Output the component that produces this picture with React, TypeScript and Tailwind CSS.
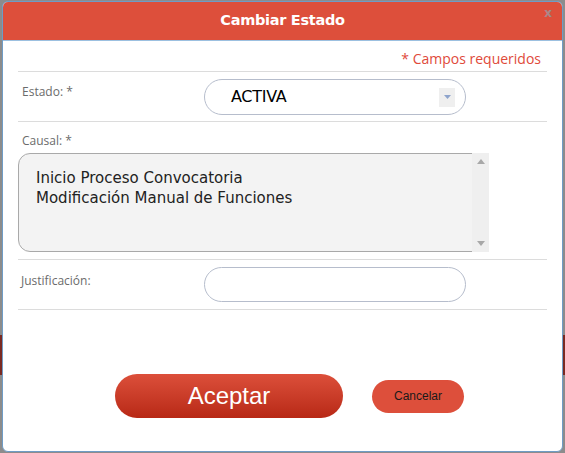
export default function App() {
  return (
    <div className="relative w-[565px] h-[453px] bg-[#8c8c8c] overflow-hidden">
      <div className="absolute left-0 top-[335px] w-[3px] h-[40px] bg-[#7a2a22]" />
      <div className="absolute right-0 top-[335px] w-[3px] h-[40px] bg-[#7a2a22]" />
      <div className="absolute left-[2px] top-[1px] w-[561px] h-[451px] rounded-[6px] border border-[#6f9cc6] bg-white overflow-hidden flex flex-col">
        <div className="h-[39px] shrink-0 bg-[#dd4f3b] border-b border-[#9cc0e0] relative flex items-center justify-center">
          <span className="text-white font-bold text-[14.5px] font-['DejaVu_Sans',sans-serif] tracking-[-0.3px]">Cambiar Estado</span>
          <span className="absolute right-[10px] top-[5px] text-[12px] font-bold text-[#a8888a] font-['DejaVu_Sans',sans-serif] leading-none">x</span>
        </div>
        <div className="px-[15px] font-['Open_Sans',sans-serif]">
          <div className="h-[30px] flex items-center justify-end pr-[6px] pt-[4px] text-[14px] text-[#e04a3a]">* Campos requeridos</div>
          <div className="border-t border-[#dcdcdc]" />
          <div className="h-[49px] flex items-start">
            <div className="w-[186px] pl-[4px] pt-[11px] text-[12px] text-[#6b6b6b]">Estado: *</div>
            <div className="mt-[7px] w-[262px] h-[36px] rounded-full border border-[#b6bdcc] flex items-center pl-[26px] pr-[10px]">
              <span className="flex-1 text-[16px] text-black font-['DejaVu_Sans',sans-serif] tracking-[-0.3px]">ACTIVA</span>
              <span className="w-[16px] h-[19px] bg-[#efefef] flex items-center justify-center">
                <svg width="7" height="4" viewBox="0 0 7 4"><path d="M0 0h7L3.5 4z" fill="#8ea4cc" /></svg>
              </span>
            </div>
          </div>
          <div className="border-t border-[#dcdcdc]" />
          <div className="pl-[4px] pt-[10px] h-[31px] text-[12px] text-[#6b6b6b]">Causal: *</div>
          <div className="flex">
            <div className="w-[471px] h-[99px] bg-[#f3f3f3] border border-[#a9a9a9] rounded-[12px] rounded-r-none flex">
              <div className="flex-1 pl-[17px] pt-[14px] text-[15px] leading-[20px] text-[#222] font-['DejaVu_Sans',sans-serif]">
                <div>Inicio Proceso Convocatoria</div>
                <div>Modificación Manual de Funciones</div>
              </div>
              <div className="w-[17px] -mr-[1px] -my-[1px] bg-[#efefef] flex flex-col items-center justify-between py-[6px]">
                <svg width="8" height="5" viewBox="0 0 8 5"><path d="M0 5h8L4 0z" fill="#a8a8a8" /></svg>
                <svg width="8" height="5" viewBox="0 0 8 5"><path d="M0 0h8L4 5z" fill="#a8a8a8" /></svg>
              </div>
            </div>
          </div>
          <div className="mt-[7px] border-t border-[#dcdcdc]" />
          <div className="h-[49px] flex items-start">
            <div className="w-[186px] pl-[3px] pt-[12px] text-[12px] text-[#6b6b6b]">Justificación:</div>
            <div className="mt-[7px] w-[262px] h-[35px] rounded-full border border-[#b6bdcc]" />
          </div>
          <div className="border-t border-[#dcdcdc]" />
          <div className="mt-[64px] flex items-center">
            <button className="ml-[97px] w-[228px] h-[44px] rounded-full bg-gradient-to-b from-[#dc4f3a] to-[#b82815] text-white text-[24px] font-['Liberation_Sans',sans-serif]">Aceptar</button>
            <button className="ml-[29px] w-[92px] h-[33px] rounded-full bg-[#dd4f3b] text-[#1a1a1a] text-[12px] font-['Liberation_Sans',sans-serif]">Cancelar</button>
          </div>
        </div>
      </div>
    </div>
  );
}
